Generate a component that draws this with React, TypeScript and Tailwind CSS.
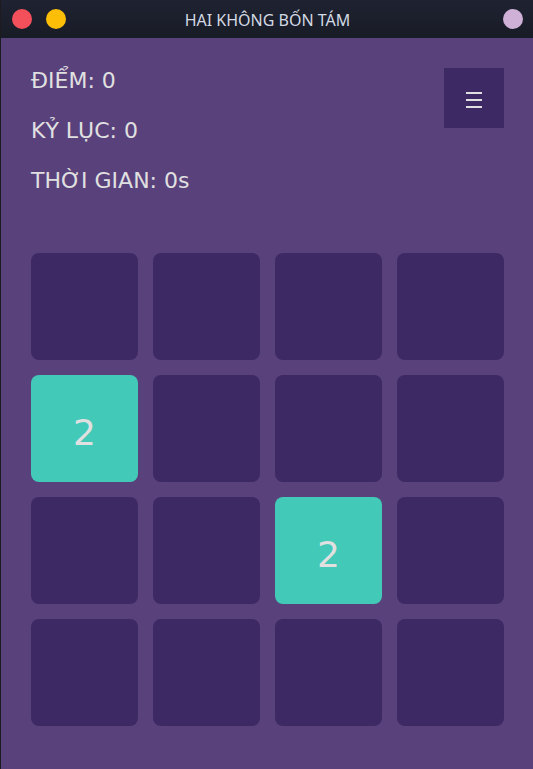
type Tile = number | null;

const board: Tile[] = [
  null, null, null, null,
  2, null, null, null,
  null, null, 2, null,
  null, null, null, null,
];

function TitleBar() {
  return (
    <header className="flex h-[38px] items-center justify-between bg-linear-to-b from-[#1f2231] to-[#181c26] pr-[10px] pl-[11px]">
      <div className="flex flex-1 gap-[14px]">
        <button type="button" aria-label="Đóng" className="size-5 rounded-full bg-[#f4505b]" />
        <button type="button" aria-label="Thu nhỏ" className="size-5 rounded-full bg-[#fdbe08]" />
      </div>
      <h1 className="pt-0.5 font-['Noto_Sans',sans-serif] text-base leading-5 text-[#d3dae3]">HAI KHÔNG BỐN TÁM</h1>
      <div className="flex flex-1 justify-end">
        <button type="button" aria-label="Ghim" className="size-5 rounded-full bg-[#cfb1d8]" />
      </div>
    </header>
  );
}

function Stats() {
  return (
    <div className="text-[22px] leading-[50px]">
      <p>ĐIỂM: 0</p>
      <p>KỶ LỤC: 0</p>
      <p>THỜI GIAN: 0s</p>
    </div>
  );
}

function MenuButton() {
  return (
    <button type="button" aria-label="Menu" className="mt-3 flex size-[60px] items-center justify-center bg-[#3d2963] pt-1">
      <svg width="16" height="16" viewBox="0 0 16 16" fill="currentColor" aria-hidden="true">
        <rect width="16" height="2" />
        <rect y="7" width="16" height="2" />
        <rect y="14" width="16" height="2" />
      </svg>
    </button>
  );
}

function Board() {
  return (
    <div className="mt-[47px] grid grid-cols-4 gap-[15px]">
      {board.map((value, i) => (
        <div
          key={i}
          className={`flex aspect-square items-center justify-center rounded-lg pt-2 text-4xl ${value ? "bg-[#42c9b8]" : "bg-[#3d2963]"}`}
        >
          {value}
        </div>
      ))}
    </div>
  );
}

export default function App() {
  return (
    <div className="flex min-h-screen flex-col border-l border-[#1c1c20] bg-[#59417c] font-['DejaVu_Sans',sans-serif] text-[#e0e0e0]">
      <TitleBar />
      <main className="flex-1 pt-[18px] pr-[29px] pb-10 pl-[30px]">
        <div className="flex items-start justify-between">
          <Stats />
          <MenuButton />
        </div>
        <Board />
      </main>
    </div>
  );
}
